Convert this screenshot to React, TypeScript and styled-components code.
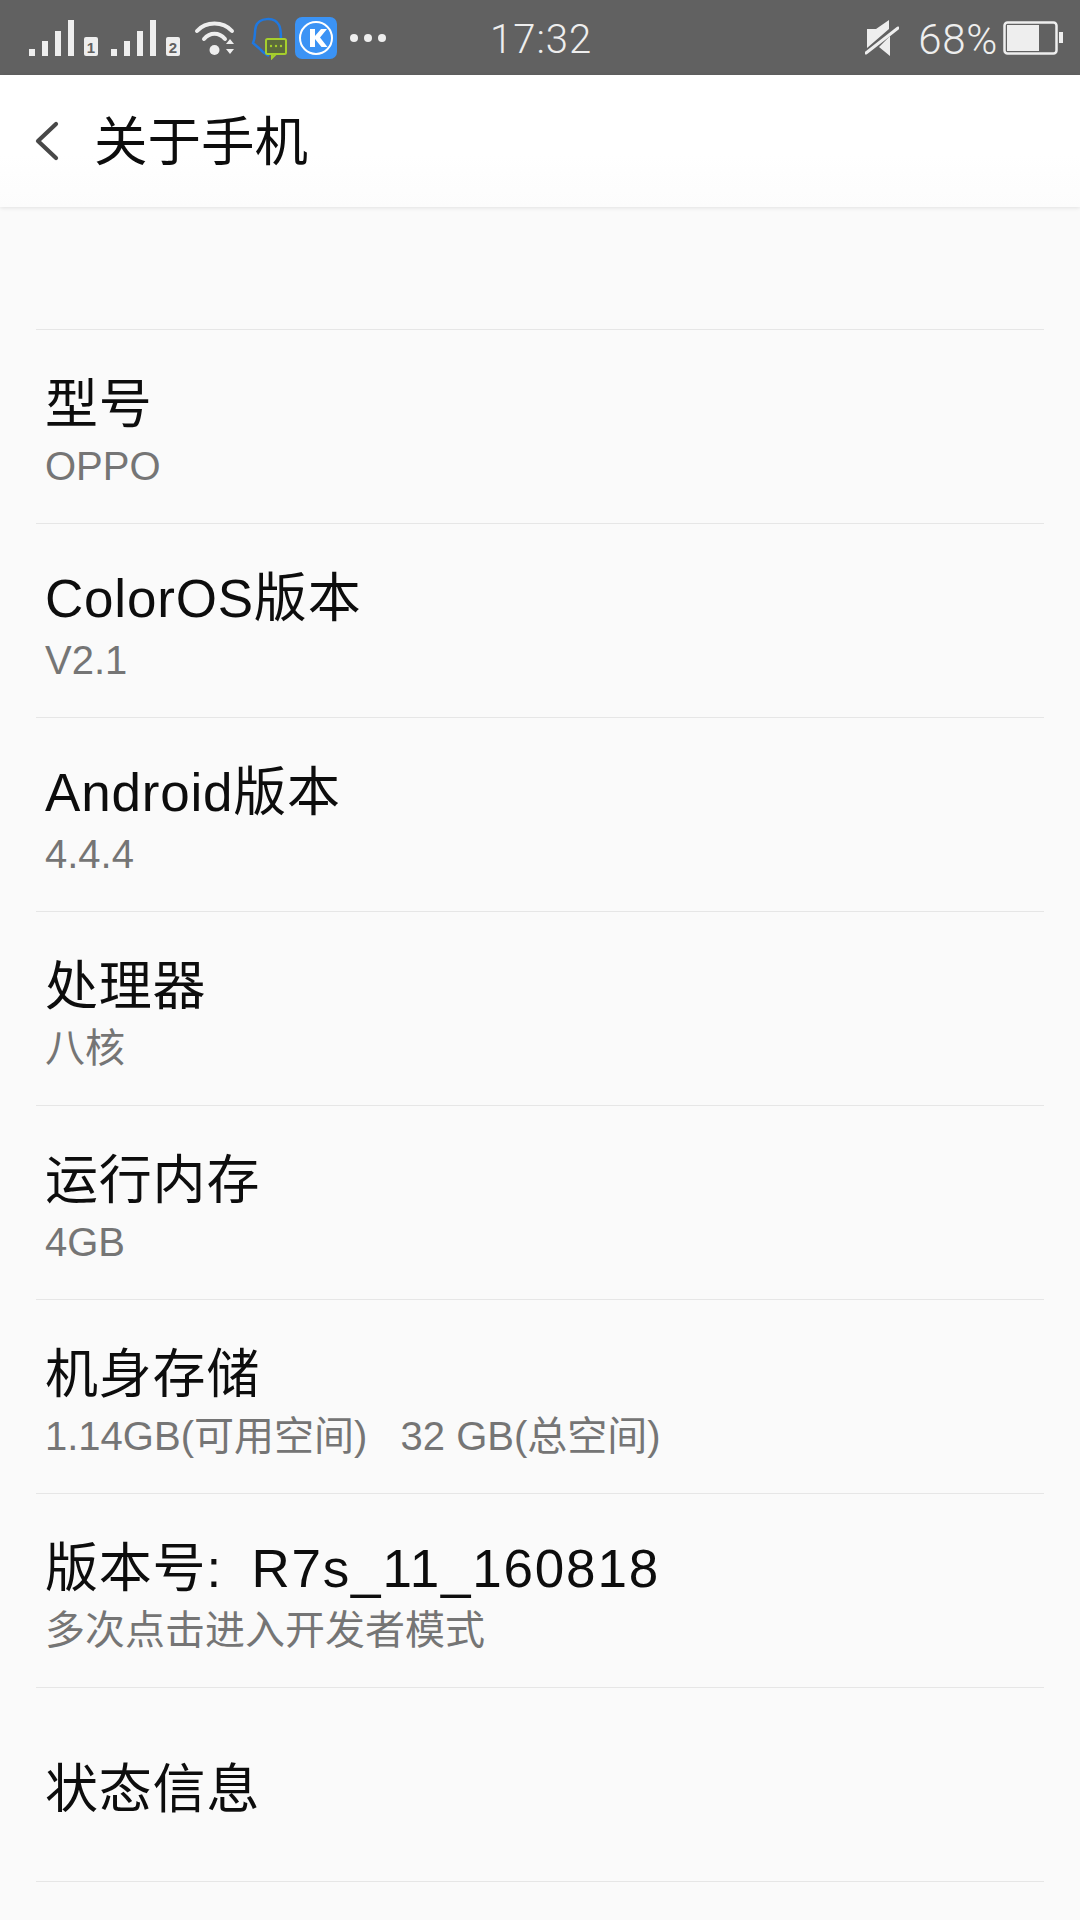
import styled, { createGlobalStyle } from "styled-components";

const FONT = `"Liberation Sans", "Noto Sans CJK SC", "Noto Sans", sans-serif`;

const GlobalStyle = createGlobalStyle`
  html, body {
    margin: 0;
    padding: 0;
    background: #fafafa;
  }
  * {
    box-sizing: border-box;
  }
`;

const Page = styled.div`
  width: 1080px;
  height: 1920px;
  overflow: hidden;
  display: flex;
  flex-direction: column;
  background: #fafafa;
  font-family: ${FONT};
`;

const StatusBar = styled.div`
  height: 75px;
  flex: none;
  display: grid;
  grid-template-columns: 461px auto 1fr;
  align-items: center;
  padding: 0 17px 0 29px;
  background: #616161;
  color: #eeeeee;
`;

const StatusLeft = styled.div`
  display: flex;
  align-items: center;
  gap: 8px;
`;

const StatusRight = styled.div`
  display: flex;
  align-items: center;
  justify-content: flex-end;
`;

const Clock = styled.div`
  padding-top: 3px;
  font-family: "Roboto", sans-serif;
  font-size: 40px;
  font-weight: 300;
  letter-spacing: 1px;
`;

const Percent = styled.span`
  padding-top: 3px;
  font-family: "Roboto", sans-serif;
  font-size: 42px;
  font-weight: 300;
  letter-spacing: 0.7px;
  margin: 0 5px 0 19px;
`;

const Header = styled.header`
  height: 132px;
  flex: none;
  display: flex;
  align-items: center;
  padding-left: 35px;
  background: linear-gradient(#ffffff 60%, #fcfcfc);
  box-shadow: 0 1px 4px rgba(0, 0, 0, 0.1);
  position: relative;
`;

const Title = styled.h1`
  margin: 0 0 8px 35px;
  font-size: 53.500px;
  font-weight: 400;
  color: #0d0d0d;
`;

const List = styled.div`
  padding: 122px 36px 0;
  display: flex;
  flex-direction: column;
`;

const Row = styled.div`
  height: 194px;
  border-top: 1px solid #e6e6e6;
  display: flex;
  flex-direction: column;
  justify-content: center;
  padding: 10px 9px 0;
  &:last-child {
    border-bottom: 1px solid #e6e6e6;
    height: 195px;
  }
`;

const RowTitle = styled.div`
  font-size: 53px;
  line-height: 64px;
  letter-spacing: 0.800px;
  color: #0d0d0d;
`;

const Colon = styled.span`
  margin-right: 13px;
`;

const BuildNumber = styled.span`
  letter-spacing: 1.800px;
`;

const RowValue = styled.div`
  margin-top: 5px;
  font-size: 40px;
  line-height: 48px;
  color: #757575;
  white-space: pre;
`;

const Signal = ({ num }: { num: string }) => (
  <svg width="74" height="36" viewBox="0 0 74 36">
    <rect x="0" y="29" width="6" height="7" fill="#eee" />
    <rect x="13" y="21" width="6" height="15" fill="#eee" />
    <rect x="26" y="11" width="6" height="25" fill="#eee" />
    <rect x="39" y="0" width="6" height="36" fill="#eee" />
    <rect x="55" y="17" width="14" height="19" rx="2" fill="#eee" />
    <text x="62" y="33" fontSize="15" fontWeight="700" textAnchor="middle" fill="#616161" fontFamily="Liberation Sans">
      {num}
    </text>
  </svg>
);

const Wifi = () => (
  <svg width="50" height="36" viewBox="0 0 50 36" fill="none" stroke="#eee" strokeLinecap="round">
    <path d="M4 11 C13 1 30 1 39 11" strokeWidth="4" />
    <path d="M11 19 C17 12 26 12 32 19" strokeWidth="4" />
    <circle cx="21.500" cy="30" r="5" fill="#eee" stroke="none" />
    <path d="M33 24 l4 -5 l4 5 z M33 29 h8 l-4 5 z" fill="#eee" stroke="none" />
  </svg>
);

const HeadChat = () => (
  <svg width="36" height="44" viewBox="0 0 36 44" fill="none">
    <path
      d="M9 33 L2 27 C5 21 3 16 5 10 C8 2 23 0 28 9 C30 13 30 18 30 23 M9 33 C12 37 15 38 18 40"
      stroke="#1f78e0"
      strokeWidth="2.500"
    />
    <rect x="15" y="23" width="20" height="15" rx="1.500" fill="#5c6a3c" stroke="#a6cf2c" strokeWidth="2" />
    <path d="M21 38 v4 l4 -4" stroke="#a6cf2c" strokeWidth="2" />
    <circle cx="20" cy="30" r="1.200" fill="#a6cf2c" />
    <circle cx="25" cy="30" r="1.200" fill="#a6cf2c" />
    <circle cx="30" cy="30" r="1.200" fill="#a6cf2c" />
  </svg>
);

const Kugou = () => (
  <svg width="42" height="42" viewBox="0 0 42 42">
    <rect width="42" height="42" rx="7" fill="#3b93f5" />
    <circle cx="21" cy="21" r="16" fill="none" stroke="#fff" strokeWidth="2" />
    <path d="M15 12 h5 v7 l6 -7 h6 l-7 8.500 l7.500 9.500 h-6 l-6.500 -8 v8 h-5 z" fill="#fff" />
  </svg>
);

const Dots = () => (
  <svg width="42" height="10" viewBox="0 0 42 10">
    <circle cx="9" cy="5" r="4" fill="#eee" />
    <circle cx="23" cy="5" r="4" fill="#eee" />
    <circle cx="37" cy="5" r="4" fill="#eee" />
  </svg>
);

const Muted = () => (
  <svg width="34" height="38" viewBox="0 0 34 38">
    <path d="M2 10 H11 L24 1 V10 L2 29 Z M25 17 V37 L14 28 Z" fill="#eee" />
    <path d="M1 34 L33 9" stroke="#eee" strokeWidth="3" strokeLinecap="round" />
  </svg>
);

const Battery = () => (
  <svg width="60" height="34" viewBox="0 0 60 34">
    <rect x="1.500" y="1.500" width="52" height="31" rx="3" fill="none" stroke="#eee" strokeWidth="2.500" />
    <rect x="4" y="4" width="32" height="26" fill="#eee" />
    <rect x="56" y="11" width="4" height="11" fill="#eee" />
  </svg>
);

const Chevron = () => (
  <svg width="24" height="42" viewBox="0 0 24 42" fill="none">
    <path d="M21 4 L3 21 L21 38" stroke="#484848" strokeWidth="4.200" strokeLinecap="round" strokeLinejoin="round" />
  </svg>
);

const rows = [
  { title: "型号", value: "OPPO" },
  { title: "ColorOS版本", value: "V2.1" },
  { title: "Android版本", value: "4.4.4" },
  { title: "处理器", value: "八核" },
  { title: "运行内存", value: "4GB" },
  { title: "机身存储", value: "1.14GB(可用空间)   32 GB(总空间)" },
  {
    title: (
      <>
        版本号<Colon>:</Colon>
        <BuildNumber> R7s_11_160818</BuildNumber>
      </>
    ),
    value: "多次点击进入开发者模式",
  },
  { title: "状态信息", value: "" },
];

export default function App() {
  return (
    <Page>
      <GlobalStyle />
      <StatusBar>
        <StatusLeft>
          <Signal num="1" />
          <Signal num="2" />
          <Wifi />
          <HeadChat />
          <Kugou />
          <Dots />
        </StatusLeft>
        <Clock>17:32</Clock>
        <StatusRight>
          <Muted />
          <Percent>68%</Percent>
          <Battery />
        </StatusRight>
      </StatusBar>
      <Header>
        <Chevron />
        <Title>关于手机</Title>
      </Header>
      <List>
        {rows.map((row, i) => (
          <Row key={i}>
            <RowTitle>{row.title}</RowTitle>
            {row.value && <RowValue>{row.value}</RowValue>}
          </Row>
        ))}
      </List>
    </Page>
  );
}
